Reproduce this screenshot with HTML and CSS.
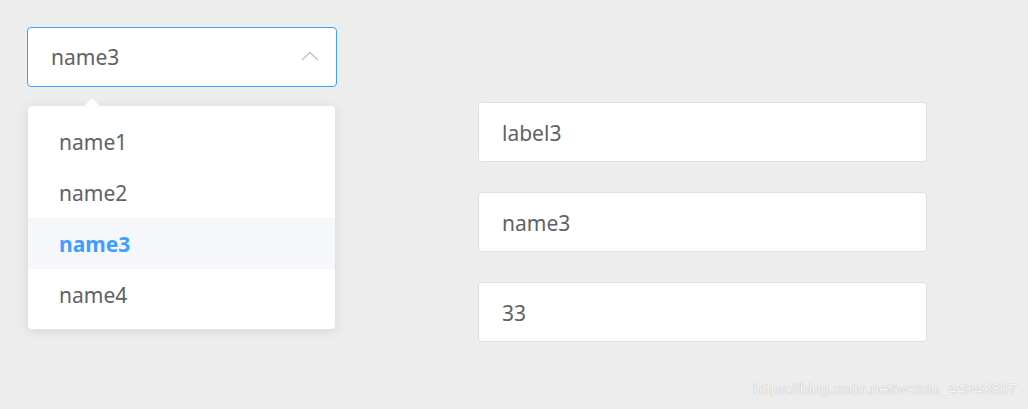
FILE: index.html
```html
<!DOCTYPE html>
<html>
<head>
<meta charset="utf-8">
<link rel="stylesheet" href="styles.css">
</head>
<body>
<div class="page">
  <div class="select-col">
    <div class="select">
      <span class="select-value">name3</span>
      <svg class="chevron" width="18" height="10" viewBox="0 0 18 10"><path d="M1 9 L9 1.5 L17 9" fill="none" stroke="#c0c4cc" stroke-width="1.4"/></svg>
    </div>
    <div class="dropdown">
      <div class="arrow"></div>
      <ul class="options">
        <li class="option">name1</li>
        <li class="option">name2</li>
        <li class="option selected">name3</li>
        <li class="option">name4</li>
      </ul>
    </div>
  </div>
  <div class="inputs-col">
    <div class="input">label3</div>
    <div class="input">name3</div>
    <div class="input">33</div>
  </div>
</div>
<div class="watermark">https://blog.csdn.net/weixin_44040867</div>
</body>
</html>
```
FILE: styles.css
```css
html, body {
  margin: 0;
  padding: 0;
  background: #ededed;
  height: 100%;
  overflow: hidden;
}
body {
  font-family: "Noto Sans", "Open Sans", sans-serif;
  color: #606266;
  position: relative;
}
.page {
  display: flex;
  align-items: flex-start;
  padding: 27px 0 0 27px;
}
.select-col {
  position: relative;
  width: 310px;
}
.select {
  box-sizing: border-box;
  height: 60px;
  background: #fff;
  border: 1px solid #409eff;
  border-radius: 4px;
  display: flex;
  align-items: center;
  justify-content: space-between;
  padding: 0 17px 0 23px;
  font-size: 21px;
}
.select-value {
  line-height: 1;
  margin-top: 1px;
}
.chevron {
  display: block;
  margin-top: -2px;
}
.dropdown {
  position: absolute;
  left: 1px;
  top: 79px;
  width: 307px;
  background: #fff;
  border-radius: 4px;
  box-shadow: 0 2px 12px rgba(0,0,0,0.1);
}
.arrow {
  position: absolute;
  top: -8px;
  left: 56px;
  width: 0;
  height: 0;
  border-left: 8px solid transparent;
  border-right: 8px solid transparent;
  border-bottom: 8px solid #fff;
}
.options {
  list-style: none;
  margin: 0;
  padding: 10px 0 9px;
}
.option {
  box-sizing: border-box;
  height: 51px;
  line-height: 51px;
  padding: 1px 0 0 31px;
  font-size: 21px;
  color: #606266;
}
.option.selected {
  background: #f5f7fa;
  color: #409eff;
  font-weight: 700;
}
.inputs-col {
  margin-left: 141px;
  margin-top: 75px;
  display: flex;
  flex-direction: column;
  gap: 30px;
  width: 449px;
}
.input {
  box-sizing: border-box;
  height: 60px;
  background: #fff;
  border: 1px solid #dcdfe6;
  border-radius: 4px;
  padding: 2px 23px 0;
  display: flex;
  align-items: center;
  font-size: 21px;
  color: #606266;
}
.watermark {
  position: absolute;
  right: 11px;
  bottom: 11px;
  font-family: "Liberation Sans", Arial, sans-serif;
  font-size: 15.5px;
  color: #f6f6f6;
  text-shadow: 0 0 1px #b8b8b8, 0 0 1px #c8c8c8;
}
```
